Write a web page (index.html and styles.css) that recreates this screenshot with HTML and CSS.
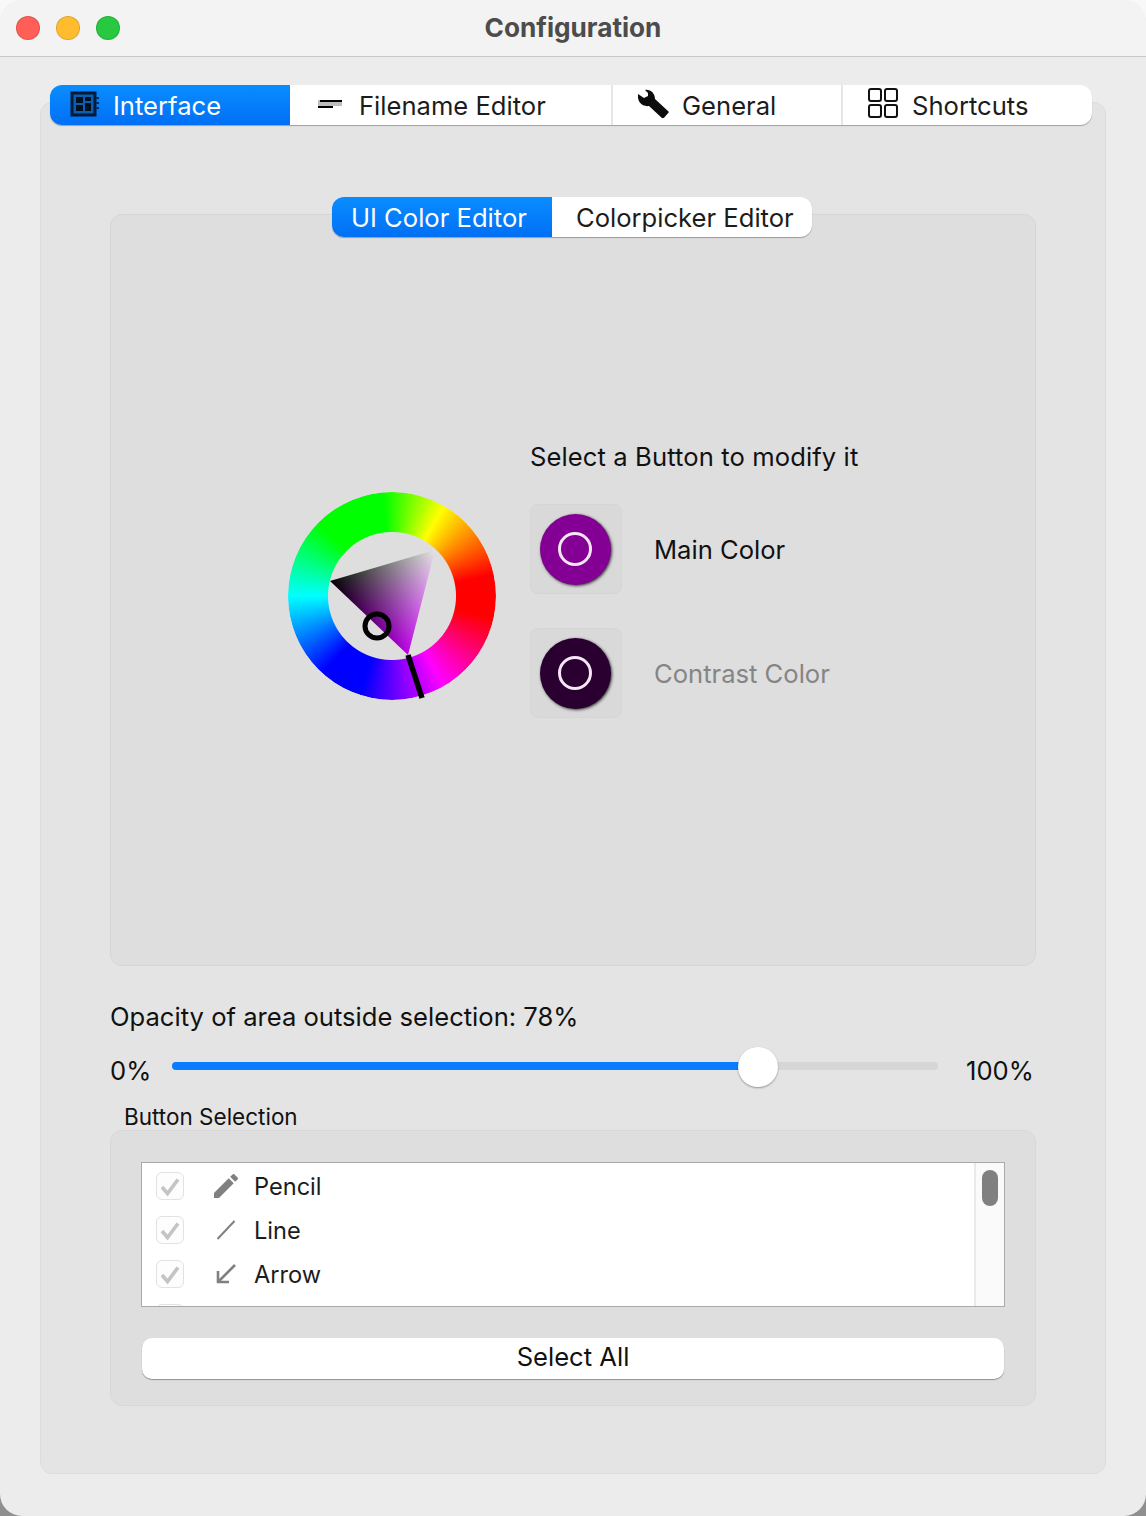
FILE: index.html
```html
<!DOCTYPE html>
<html lang="en">

<head>
    <meta charset="UTF-8">
    <title>Configuration</title>
    <link rel="stylesheet" href="styles.css">
</head>

<body>
    <div class="window">
        <div class="titlebar">
            <div class="lights">
                <span class="light red"></span>
                <span class="light yellow"></span>
                <span class="light green"></span>
            </div>
            <div class="title">Configuration</div>
        </div>

        <div class="content">
            <div class="tabs">
                <div class="tab tab-interface active">
                    <svg class="tab-icon" width="30" height="28" viewBox="0 0 30 28">
                        <rect x="2" y="2" width="23" height="22" fill="#0a5fb0" stroke="#001a38" stroke-width="3"/>
                        <rect x="6" y="6" width="7" height="6" fill="#00101f"/>
                        <rect x="15" y="6" width="6" height="4" fill="#00101f"/>
                        <rect x="6" y="14" width="7" height="6" fill="#00101f"/>
                        <rect x="15" y="12" width="6" height="8" fill="#00101f"/>
                        <path d="M26 7h3M26 12h3M26 17h3" stroke="#00305f" stroke-width="2"/>
                    </svg>
                    <span>Interface</span>
                </div>
                <div class="tab tab-filename">
                    <svg class="tab-icon" width="24" height="14" viewBox="0 0 24 14">
                        <rect x="0" y="2" width="24" height="6" fill="#bdbdbd"/>
                        <rect x="2" y="2" width="22" height="2" fill="#000"/>
                        <rect x="0" y="8" width="15" height="2" fill="#000"/>
                    </svg>
                    <span>Filename Editor</span>
                </div>
                <div class="tab tab-general">
                    <svg class="tab-icon icon-up" width="32" height="30" viewBox="8 5 32 30">
                        <path d="M15 7C20 6 25 10 25 16L39 29L33 36L19 23C12 24 7 19 8 11L14 15L18 13L18 10Z" fill="#0c0c0c"/>
                    </svg>
                    <span>General</span>
                </div>
                <div class="tab tab-shortcuts">
                    <svg class="tab-icon icon-up" width="30" height="30" viewBox="0 0 30 30" fill="none" stroke="#111" stroke-width="2">
                        <rect x="1" y="1" width="12" height="12" rx="2"/>
                        <rect x="17" y="1" width="12" height="12" rx="2"/>
                        <rect x="1" y="17" width="12" height="12" rx="2"/>
                        <rect x="17" y="17" width="12" height="12" rx="2"/>
                    </svg>
                    <span>Shortcuts</span>
                </div>
            </div>

            <div class="panel">
                <div class="subtabs">
                    <div class="subtab subtab-ui active">UI Color Editor</div>
                    <div class="subtab subtab-picker">Colorpicker Editor</div>
                </div>

                <div class="editor">
                    <div class="wheel">
                        <div class="wheel-ring"></div>
                        <svg class="wheel-marks" width="208" height="208" viewBox="0 0 208 208">
                            <defs>
                                <clipPath id="tri-clip">
                                    <polygon points="120,163 42,89 147,58"/>
                                </clipPath>
                                <linearGradient id="hue-grad" gradientUnits="userSpaceOnUse" x1="120" y1="163" x2="93.6" y2="73.75">
                                    <stop offset="0" stop-color="#bb00e6"/>
                                    <stop offset="1" stop-color="#000"/>
                                </linearGradient>
                                <linearGradient id="white-grad" gradientUnits="userSpaceOnUse" x1="147" y1="58" x2="81.8" y2="126.7">
                                    <stop offset="0" stop-color="#e4e4e4"/>
                                    <stop offset="1" stop-color="#000"/>
                                </linearGradient>
                            </defs>
                            <g class="triangle" clip-path="url(#tri-clip)">
                                <rect x="30" y="50" width="130" height="120" fill="#000"/>
                                <rect class="add" x="30" y="50" width="130" height="120" fill="url(#hue-grad)"/>
                                <rect class="add" x="30" y="50" width="130" height="120" fill="url(#white-grad)"/>
                            </g>
                            <circle cx="89" cy="134" r="12" fill="none" stroke="#000" stroke-width="5"/>
                            <line x1="120" y1="163" x2="134" y2="206" stroke="#000" stroke-width="5.5"/>
                        </svg>
                    </div>

                    <div class="color-column">
                        <div class="select-label">Select a Button to modify it</div>
                        <div class="color-row">
                            <div class="color-box"><div class="color-btn main"><span class="color-ring"></span></div></div>
                            <span class="color-name">Main Color</span>
                        </div>
                        <div class="color-row muted">
                            <div class="color-box"><div class="color-btn contrast"><span class="color-ring"></span></div></div>
                            <span class="color-name">Contrast Color</span>
                        </div>
                    </div>
                </div>

                <div class="opacity-label">Opacity of area outside selection: 78%</div>
                <div class="slider-row">
                    <span>0%</span>
                    <div class="slider">
                        <div class="slider-fill"></div>
                        <div class="slider-thumb"></div>
                    </div>
                    <span class="slider-max">100%</span>
                </div>

                <div class="group-label">Button Selection</div>
                <div class="group">
                    <div class="list">
                        <div class="list-rows">
                            <div class="row">
                                <span class="check"><svg width="26" height="26" viewBox="0 0 26 26"><path d="M5 14L10.5 20.5L21 6.5" fill="none" stroke="#c4c4c4" stroke-width="3.6"/></svg></span>
                                <svg class="row-icon" width="32" height="32" viewBox="0 0 24 24" fill="#808080">
                                    <path d="M3 17.25V21h3.75L17.81 9.94l-3.75-3.75L3 17.25zM20.71 7.04c.39-.39.39-1.02 0-1.41l-2.34-2.34c-.39-.39-1.02-.39-1.41 0l-1.83 1.83 3.75 3.75 1.83-1.83z"/>
                                </svg>
                                <span class="row-name">Pencil</span>
                            </div>
                            <div class="row">
                                <span class="check"><svg width="26" height="26" viewBox="0 0 26 26"><path d="M5 14L10.5 20.5L21 6.5" fill="none" stroke="#c4c4c4" stroke-width="3.6"/></svg></span>
                                <svg class="row-icon" width="32" height="32" viewBox="0 0 32 32">
                                    <line x1="7.5" y1="25" x2="24.5" y2="7" stroke="#808080" stroke-width="2"/>
                                </svg>
                                <span class="row-name">Line</span>
                            </div>
                            <div class="row">
                                <span class="check"><svg width="26" height="26" viewBox="0 0 26 26"><path d="M5 14L10.5 20.5L21 6.5" fill="none" stroke="#c4c4c4" stroke-width="3.6"/></svg></span>
                                <svg class="row-icon" width="32" height="32" viewBox="0 0 32 32" fill="none" stroke="#808080" stroke-width="2.6">
                                    <path d="M25 7L9 23"/>
                                    <path d="M8 13V24H19"/>
                                </svg>
                                <span class="row-name">Arrow</span>
                            </div>
                            <div class="row">
                                <span class="check"></span>
                            </div>
                        </div>
                        <div class="scrollbar"><div class="scroll-thumb"></div></div>
                    </div>
                    <div class="select-all">Select All</div>
                </div>
            </div>
        </div>
    </div>
</body>

</html>
```

FILE: styles.css
```css
html, body {
    margin: 0;
    padding: 0;
}

body {
    background: linear-gradient(#f8f8f8 0, #f8f8f8 200px, #8f8f8f 1480px);
    font-family: 'Inter', 'Liberation Sans', sans-serif;
    font-size: 25.6px;
    color: #1c1c1c;
}

.window {
    width: 1146px;
    height: 1516px;
    box-sizing: border-box;
    background: #ececec;
    border-radius: 22px;
    overflow: hidden;
}

.titlebar {
    height: 56px;
    display: flex;
    align-items: center;
    justify-content: center;
    position: relative;
    background: #f3f3f3;
    border-bottom: 1px solid #c9c9c9;
}

.lights {
    position: absolute;
    left: 16px;
    top: 16px;
    display: flex;
    gap: 16px;
}

.light {
    width: 24px;
    height: 24px;
    box-sizing: border-box;
    border-radius: 50%;
    border: 1px solid rgba(0, 0, 0, 0.12);
}

.red { background: #ff5f57; }
.yellow { background: #febc2e; }
.green { background: #28c840; }

.title {
    font-size: 26.2px;
    font-weight: 700;
    color: #4c4c4c;
    padding-bottom: 2px;
}

.content {
    padding: 28px 40px 0;
}

.tabs {
    display: flex;
    position: relative;
    height: 40px;
    margin: 0 14px 0 10px;
    background: #fff;
    border-radius: 12px;
    box-shadow: 0 1px 1px rgba(0, 0, 0, 0.3);
}

.tab {
    display: flex;
    align-items: center;
    box-sizing: border-box;
    height: 40px;
    border-right: 2px solid #e6e6e6;
}

.tab.active {
    color: #fff;
    border-right: none;
    border-radius: 12px 0 0 12px;
    background: linear-gradient(#0a8dff, #006ff5);
}

.tab-interface { width: 240px; padding-left: 20px; gap: 13px; }
.tab-filename { width: 323px; padding-left: 28px; gap: 17px; }
.tab-general { width: 230px; padding-left: 25px; gap: 12px; }
.tab-shortcuts { width: 249px; padding-left: 25px; gap: 14px; border-right: none; }

.icon-up {
    margin-bottom: 4px;
}

.panel {
    height: 1372px;
    box-sizing: border-box;
    margin-top: -23px;
    padding: 94px 69px 0;
    background: #e4e4e4;
    border: 1px solid #dcdcdc;
    border-radius: 12px;
}

.subtabs {
    display: flex;
    position: relative;
    width: 480px;
    height: 40px;
    margin: 0 0 -23px 222px;
    background: #fff;
    border-radius: 12px;
    box-shadow: 0 1px 1px rgba(0, 0, 0, 0.3);
}

.subtab {
    height: 40px;
    line-height: 42px;
    box-sizing: border-box;
}

.subtab.active {
    color: #fff;
    border-radius: 12px 0 0 12px;
    background: linear-gradient(#0a8dff, #006ff5);
}

.subtab-ui { width: 220px; padding-left: 19px; }
.subtab-picker { padding-left: 24px; }

.editor {
    display: flex;
    align-items: flex-start;
    gap: 34px;
    height: 752px;
    box-sizing: border-box;
    padding: 227px 0 0 177px;
    background: #dedede;
    border: 1px solid #d5d5d5;
    border-radius: 12px;
}

.wheel {
    position: relative;
    width: 208px;
    height: 208px;
    margin-top: 50px;
}

.wheel-ring {
    width: 208px;
    height: 208px;
    border-radius: 50%;
    background: conic-gradient(#24ff00 0deg, #ff0 30deg, #f00 78deg, #f00 102deg, #f0f 150deg, #00f 198deg, #00f 222deg, #0ff 270deg, #0f0 315deg, #0f0 355deg, #24ff00 360deg);
    -webkit-mask: radial-gradient(circle, transparent 63.5px, #000 64.5px);
    mask: radial-gradient(circle, transparent 63.5px, #000 64.5px);
}

.wheel-marks {
    position: absolute;
    left: 0;
    top: 0;
    overflow: visible;
}

.triangle {
    isolation: isolate;
}

.add {
    mix-blend-mode: plus-lighter;
}

.select-label {
    height: 30px;
    line-height: 30px;
    margin-bottom: 32px;
    color: #111;
    letter-spacing: 0.1px;
}

.color-row {
    display: flex;
    align-items: center;
    gap: 32px;
    margin-bottom: 34px;
    color: #111;
}

.color-row.muted {
    color: #858585;
}

.color-box {
    display: flex;
    align-items: center;
    justify-content: center;
    width: 92px;
    height: 90px;
    box-sizing: border-box;
    padding-right: 2px;
    background: #d9d9d9;
    border: 1px solid #d5d5d5;
    border-radius: 8px;
}

.color-btn {
    display: flex;
    align-items: center;
    justify-content: center;
    width: 71px;
    height: 71px;
    border-radius: 50%;
    box-shadow: 1px 1px 3px rgba(0, 0, 0, 0.75);
}

.color-btn.main { background: #840094; }
.color-btn.contrast { background: #2a0030; }

.color-ring {
    width: 28px;
    height: 28px;
    border: 3px solid #f4e6f4;
    border-radius: 50%;
}

.opacity-label {
    height: 30px;
    line-height: 30px;
    margin-top: 36px;
    color: #111;
}

.slider-row {
    display: grid;
    grid-template-columns: 62px 1fr 98px;
    height: 30px;
    line-height: 30px;
    margin-top: 24px;
    color: #111;
}

.slider-max {
    padding-left: 28px;
}

.slider {
    position: relative;
    height: 8px;
    margin-top: 6px;
    background: #d6d6d6;
    border-radius: 4px;
}

.slider-fill {
    width: 586px;
    height: 8px;
    background: #0a7cff;
    border-radius: 4px;
}

.slider-thumb {
    position: absolute;
    left: 566px;
    top: -15px;
    width: 40px;
    height: 40px;
    background: #fff;
    border-radius: 50%;
    box-shadow: 0 1px 2px rgba(0, 0, 0, 0.35);
}

.group-label {
    height: 28px;
    line-height: 28px;
    margin: 17px 0 -1px 14px;
    font-size: 22.5px;
    color: #111;
}

.group {
    height: 276px;
    box-sizing: border-box;
    padding: 31px 30px 0;
    background: #dedede;
    border: 1px solid #d8d8d8;
    border-radius: 12px;
}

.list {
    display: flex;
    height: 145px;
    box-sizing: border-box;
    background: #fff;
    border: 1px solid #a9a9a9;
    overflow: hidden;
}

.list-rows {
    flex: 1;
    padding-top: 1px;
}

.row {
    display: flex;
    align-items: center;
    height: 44px;
    padding-left: 14px;
    font-size: 23.6px;
}

.row-name {
    padding-top: 1px;
}

.check {
    flex: none;
    display: block;
    width: 28px;
    height: 28px;
    box-sizing: border-box;
    background: #fdfdfd;
    border: 1px solid #e2e2e2;
    border-radius: 6px;
}

.check svg {
    display: block;
}

.row-icon {
    margin: 0 12px 0 26px;
}

.scrollbar {
    flex: none;
    width: 30px;
    padding: 7px 0 0 6px;
    box-sizing: border-box;
    background: #fafafa;
    border-left: 2px solid #e9e9e9;
}

.scroll-thumb {
    width: 16px;
    height: 36px;
    background: #808080;
    border-radius: 8px;
}

.select-all {
    height: 41px;
    line-height: 38px;
    margin: 31px 1px 0;
    text-align: center;
    background: #fff;
    border-radius: 10px;
    box-shadow: 0 1px 1px rgba(0, 0, 0, 0.35);
    color: #111;
}
```
